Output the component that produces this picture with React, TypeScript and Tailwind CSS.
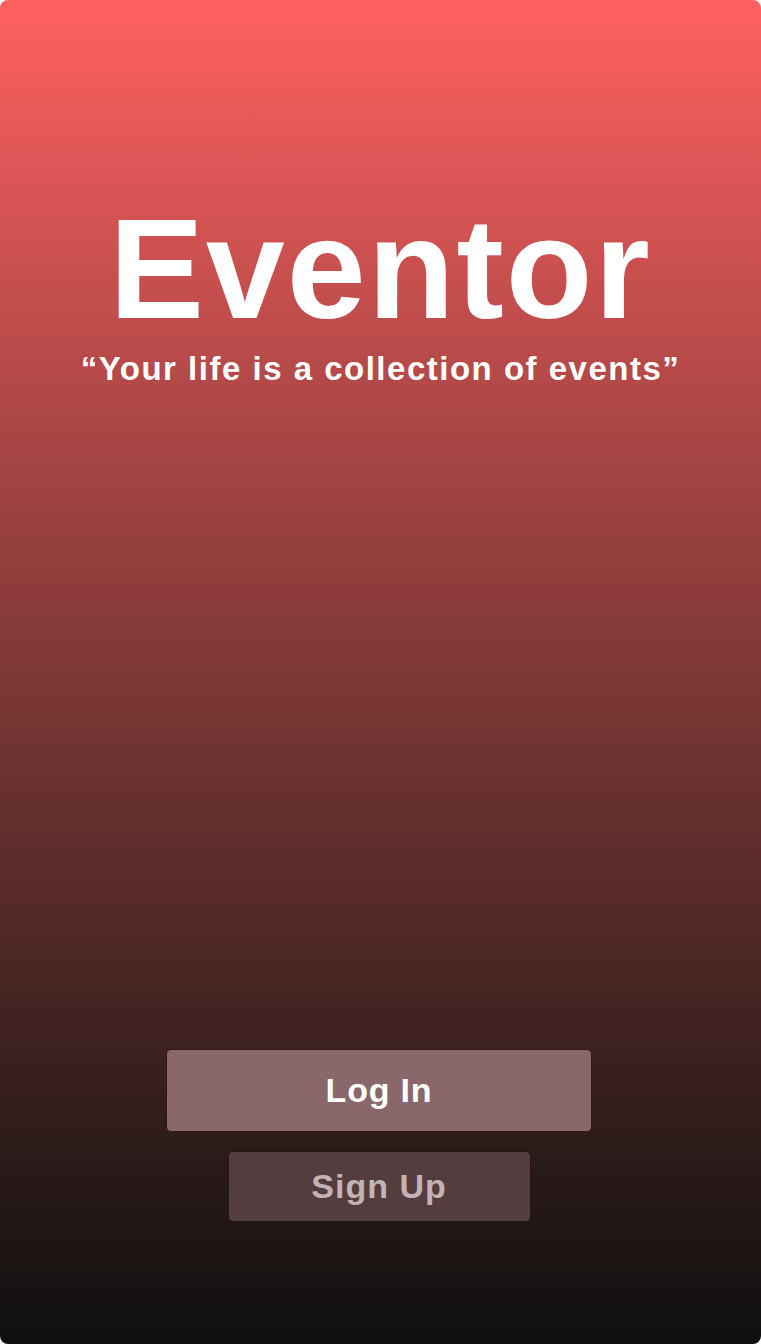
export default function App() {
  return (
    <div className="bg-white">
      <div
        className="flex h-[1344px] w-[761px] flex-col items-center rounded-[8px] bg-gradient-to-b from-[#ff6060] to-[#0f0f0f] font-['Liberation_Sans',Arial,sans-serif] text-white"
      >
        <h1 className="mt-[198px] text-[142px] font-bold leading-none tracking-[2px]">Eventor</h1>
        <p className="mt-[12px] text-[33px] font-bold leading-none tracking-[1.5px]">“Your life is a collection of events”</p>
        <div className="mt-auto mb-[122px] mr-[3px] flex flex-col items-center gap-[19px]">
          <button className="flex h-[83px] w-[426px] items-center justify-center rounded-[5px] border border-[#2e1a1b] bg-[#8a676a] text-[34px] font-bold tracking-[0.8px] text-white">
            Log In
          </button>
          <button className="flex h-[71px] w-[303px] items-center justify-center rounded-[5px] border border-[#221516] bg-[#533d3f] text-[34px] font-bold tracking-[1px] text-[#c2b3b4]">
            Sign Up
          </button>
        </div>
      </div>
    </div>
  );
}
